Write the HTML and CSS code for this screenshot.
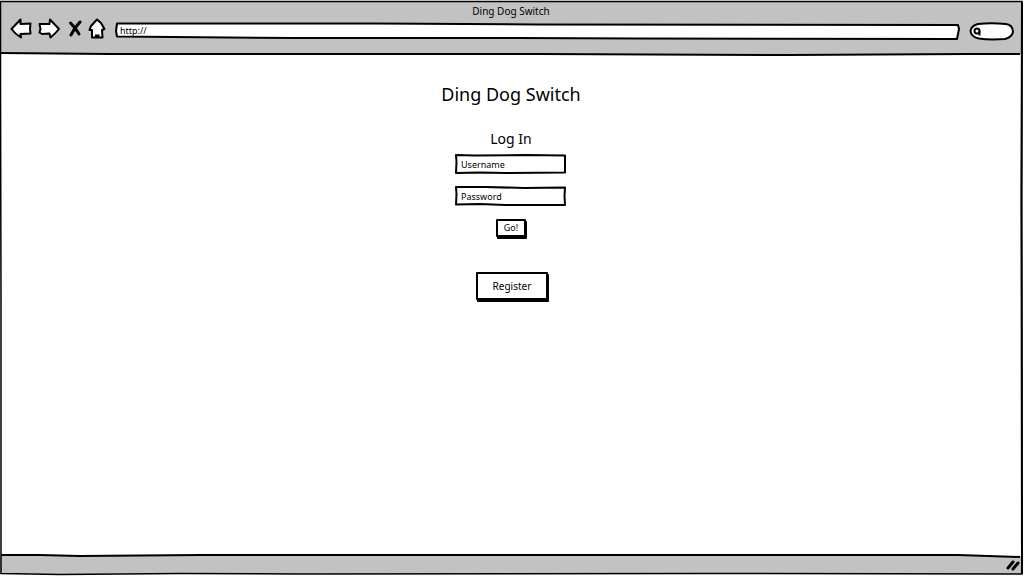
FILE: index.html
```html
<!DOCTYPE html>
<html lang="en">
<head>
<meta charset="utf-8">
<meta name="viewport" content="width=device-width, initial-scale=1">
<title>Ding Dog Switch</title>
<link rel="stylesheet" href="styles.css">
</head>
<body>
<div class="window">
  <svg class="outline" viewBox="0 0 1024 576" preserveAspectRatio="none" aria-hidden="true">
    <path d="M0.500 1.500 H1021 L1020.500 200 L1021 400 L1021 574 L700 573.500 L300 574 L180 573.500 L60 574.500 L1 573.500 L1 300 L0.500 80 Z"/>
    <path class="thick" d="M1021 2 L1020.500 200 L1021 574"/>
  </svg>
  <header class="chrome">
    <div class="caption">Ding Dog Switch</div>
    <div class="toolbar">
      <nav class="nav" aria-label="Browser">
        <button class="tool" type="button" aria-label="Back">
          <svg width="22" height="22" viewBox="0 0 22 22"><path class="shape" d="M1.500 11 L10.500 1.500 L10.500 6 L20.500 5.500 L20 11 L20.500 15.500 L10.500 16 L11 19.500 Q5 16 1.500 11 Z"/></svg>
        </button>
        <button class="tool" type="button" aria-label="Forward">
          <svg width="22" height="22" viewBox="0 0 22 22"><path class="shape" d="M21 11 L12 1.500 L11.500 6 L1.500 6 L2.500 11 L1.500 14.500 L4 16 L11.500 15.500 L12.500 19.500 Q17 16 21 11 Z"/></svg>
        </button>
        <button class="tool stop" type="button" aria-label="Stop">
          <svg width="14" height="20" viewBox="0 0 14 20"><path class="cross" d="M2.500 4 L7 9 L11 15"/><path class="cross" d="M12 3 L7 9 L3 16"/></svg>
        </button>
        <button class="tool home" type="button" aria-label="Home">
          <svg width="18" height="22" viewBox="0 0 18 22"><path class="shape" d="M9 1.500 L13 5 L16.500 11 L14 12 L14.500 19.500 L4 19.500 L4 12 L1.500 12 L3 8 Z"/><path d="M6.500 20 L7 16.500 H11.500 V20 Z"/></svg>
        </button>
      </nav>
      <div class="stack address">
        <svg class="frame" viewBox="0 0 843 18" preserveAspectRatio="none" aria-hidden="true"><path class="shape" d="M2 1.500 L260 1.500 L420 2.500 L841 3 L842 7 L840 17 L520 16.500 L400 16 L180 16 L2 14.500 L1 9 Z"/></svg>
        <input class="url" type="text" value="http://" aria-label="Address">
      </div>
      <div class="stack search">
        <svg class="frame" viewBox="0 0 46 19" preserveAspectRatio="none" aria-hidden="true"><path class="shape" d="M9 2 Q22 0.500 37 2 Q44 3 44 10 Q43 15 36 17 Q20 18 10 16.500 Q2 15 1.500 9 Q2 4 9 2 Z"/></svg>
        <svg class="lens" width="9" height="10" viewBox="0 0 9 10" aria-hidden="true"><circle cx="4" cy="4" r="2.500"/><path d="M6.500 4 V8.500"/></svg>
        <input class="query" type="text" aria-label="Search">
      </div>
    </div>
    <svg class="rule" viewBox="0 0 1024 4" preserveAspectRatio="none" aria-hidden="true"><path d="M1 1 L110 2 L540 2 L790 3 L970 2 L1022 2"/></svg>
  </header>
  <main class="page">
    <h1 class="title">Ding Dog Switch</h1>
    <h2 class="subtitle">Log In</h2>
    <form class="login">
      <div class="stack field">
        <svg class="frame" viewBox="0 0 112 20" preserveAspectRatio="none" aria-hidden="true"><path class="shape" d="M1 1 L20 1.500 L70 1 L110 1.500 L110 18.500 L50 19 L25 18.500 L1 19 L1.500 8 Z"/></svg>
        <input class="entry" type="text" placeholder="Username" aria-label="Username">
      </div>
      <div class="stack field">
        <svg class="frame" viewBox="0 0 112 20" preserveAspectRatio="none" aria-hidden="true"><path class="shape" d="M1 1 L30 1 L70 2 L110 1.500 L109.500 10 L110 19 L50 19 L25 18 L1 18.500 L1.500 8 Z"/></svg>
        <input class="entry" type="password" placeholder="Password" aria-label="Password">
      </div>
      <button class="go" type="button">Go!</button>
    </form>
    <button class="register" type="button">Register</button>
  </main>
  <footer class="status">
    <svg class="rule" viewBox="0 0 1024 4" preserveAspectRatio="none" aria-hidden="true"><path d="M1 1 L40 1 L80 2 L200 1 L960 1 L1022 3"/></svg>
    <svg class="grip" width="14" height="12" viewBox="0 0 14 12" aria-hidden="true"><path d="M2 8 L7 2 M7 9 L12 3"/></svg>
  </footer>
</div>
</body>
</html>
```
FILE: styles.css
```css
* { box-sizing: border-box; }

body {
  margin: 0;
  background: #fff;
  color: #000;
  font-family: "Noto Sans", sans-serif;
}

button, input { font: inherit; color: inherit; }

.window {
  position: relative;
  display: flex;
  flex-direction: column;
  min-height: 100vh;
  padding: 1px 3px 2px 0;
}

/* hand-drawn border lying over the whole window */
.outline {
  position: absolute;
  inset: 0;
  width: 100%;
  height: 100%;
  pointer-events: none;
  fill: none;
  stroke: #000;
  stroke-width: 1.5;
}
.outline .thick { stroke-width: 2; }

.chrome { background: #c2c2c2; }

.caption {
  padding-top: 3px;
  text-align: center;
  font-size: 10px;
  line-height: 14px;
}

.toolbar {
  display: flex;
  align-items: flex-start;
  gap: 9px;
  padding: 0 7px 0 10px;
  height: 34px;
}

.nav { display: flex; align-items: center; gap: 6px; }

.tool { display: flex; padding: 0; border: 0; background: none; }
.stop { margin-left: 2px; }

.shape { fill: #fff; stroke: #000; stroke-width: 2; stroke-linejoin: round; }
.cross { fill: none; stroke: #000; stroke-width: 3; stroke-linecap: round; }

.stack { display: grid; margin-top: 4px; }
.stack > * { grid-area: 1 / 1; min-width: 0; }
.frame { width: 100%; height: 100%; min-height: 0; }
.stack input {
  width: 100%;
  border: 0;
  background: none;
  outline: none;
  font-size: 9px;
}

.address { flex: 1; height: 18px; }
.address .url { padding: 0 5px 2px; }

.search { width: 46px; height: 19px; align-items: center; }
.search .query { padding: 0 6px 0 14px; }
.lens { margin-left: 4px; fill: none; stroke: #000; stroke-width: 2; }

.rule {
  display: block;
  width: 100%;
  height: 4px;
  fill: none;
  stroke: #000;
  stroke-width: 2;
  background: linear-gradient(#c2c2c2 50%, #fff 50%);
}

.page {
  flex: 1;
  display: flex;
  flex-direction: column;
  align-items: center;
}

.title { margin: 26px 0 0; font-size: 18px; line-height: 24px; font-weight: 400; }
.subtitle { margin: 24px 0 0; font-size: 14px; line-height: 18px; font-weight: 400; }

.login { display: flex; flex-direction: column; align-items: center; gap: 12px; padding-top: 6px; }
.login .field { width: 112px; height: 20px; margin: 0; }
.field .entry { padding: 0 6px; }
.entry::placeholder { color: #000; opacity: 1; }

.go, .register {
  padding: 0;
  border: 2px solid #000;
  border-radius: 1px;
  background: #fff;
  box-shadow: 1px 2px 0 #000;
}
.go { width: 30px; height: 18px; margin-top: 1px; font-size: 9px; line-height: 14px; }
.register { width: 72px; height: 28px; margin: 35px 0 0 2px; font-size: 10px; }

.status {
  display: flex;
  flex-direction: column;
  height: 20px;
  background: #c2c2c2;
}
.status .rule { background: linear-gradient(#fff 50%, #c2c2c2 50%); }
.grip { align-self: flex-end; margin: 2px 2px 0 0; fill: none; stroke: #000; stroke-width: 3; stroke-linecap: round; }
```
